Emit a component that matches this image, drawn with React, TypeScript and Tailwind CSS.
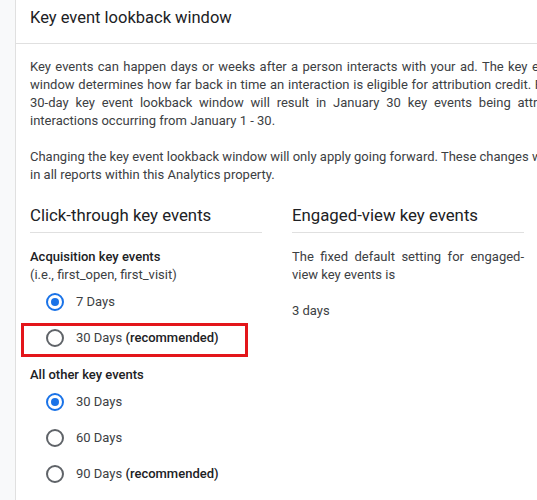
import React from "react";

function Radio({ checked }: { checked?: boolean }) {
  return checked ? (
    <span className="flex h-[18px] w-[18px] shrink-0 items-center justify-center rounded-full border-2 border-[#1a73e8]">
      <span className="h-[8px] w-[8px] rounded-full bg-[#1a73e8]" />
    </span>
  ) : (
    <span className="h-[18px] w-[18px] shrink-0 rounded-full border-2 border-[#5f6368]" />
  );
}

function Option({
  label,
  rec,
  checked,
  highlight,
}: {
  label: string;
  rec?: boolean;
  checked?: boolean;
  highlight?: boolean;
}) {
  return (
    <div className="relative flex h-[36px] items-center gap-[12px] pl-[16px]">
      {highlight && (
        <div className="pointer-events-none absolute left-[-9px] top-[3px] h-[34px] w-[227px] border-[3px] border-[#e3151a]" />
      )}
      <Radio checked={checked} />
      <span className="whitespace-nowrap text-[13px] leading-[18px] text-[#3c4043]">
        {label}
        {rec && <span className="font-medium text-[#202124]"> (recommended)</span>}
      </span>
    </div>
  );
}

function JLine({ children, narrow }: { children: React.ReactNode; narrow?: boolean }) {
  return (
    <span
      className={
        narrow
          ? "block w-[562px] whitespace-nowrap text-justify [text-align-last:justify]"
          : "block whitespace-nowrap text-justify [text-align-last:justify]"
      }
    >
      {children}
    </span>
  );
}

export default function App() {
  return (
    <div className="flex h-[500px] w-[537px] overflow-hidden bg-white font-['Roboto',sans-serif]">
      <div className="w-[16px] shrink-0 border-r border-[#e0e0e0] bg-[#f8f9fa]" />
      <div className="min-w-0 flex-1 overflow-hidden">
        <div className="h-[44px] border-b border-[#e0e0e0] pl-[14px] pt-[6px]">
          <h1 className="whitespace-nowrap text-[16.5px] leading-[24px] text-[#202124]">
            Key event lookback window
          </h1>
        </div>
        <div className="pl-[14px]">
          <p className="mt-[14px] w-[590px] text-[13px] leading-[18px] text-[#3c4043]">
            <JLine>Key events can happen days or weeks after a person interacts with your ad. The key event lookback</JLine>
            <JLine>window determines how far back in time an interaction is eligible for attribution credit. For example, a</JLine>
            <JLine narrow>30-day key event lookback window will result in January 30 key events being attributed to</JLine>
            <span className="block whitespace-nowrap">interactions occurring from January 1 - 30.</span>
          </p>
          <p className="mt-[18px] w-[590px] text-[13px] leading-[18px] text-[#3c4043]">
            <JLine>Changing the key event lookback window will only apply going forward. These changes will be reflected</JLine>
            <span className="block whitespace-nowrap">in all reports within this Analytics property.</span>
          </p>
          <div className="mt-[19px] grid w-[524px] grid-cols-2">
            <div className="pr-[30px]">
              <h2 className="whitespace-nowrap border-b border-[#e0e0e0] pb-[5px] text-[16.8px] leading-[24px] text-[#202124]">
                Click-through key events
              </h2>
              <div className="mt-[15px] text-[13px] leading-[18px]">
                <div className="font-medium text-[#202124]">Acquisition key events</div>
                <div className="text-[#3c4043]">(i.e., first_open, first_visit)</div>
              </div>
              <Option label="7 Days" checked />
              <Option label="30 Days" rec highlight />
              <div className="mt-[10px] text-[13px] font-medium leading-[18px] text-[#202124]">
                All other key events
              </div>
              <Option label="30 Days" checked />
              <Option label="60 Days" />
              <Option label="90 Days" rec />
            </div>
            <div className="pr-[30px]">
              <h2 className="whitespace-nowrap border-b border-[#e0e0e0] pb-[5px] text-[16.8px] leading-[24px] text-[#202124]">
                Engaged-view key events
              </h2>
              <p className="mt-[15px] text-justify text-[13px] leading-[18px] text-[#3c4043]">
                The fixed default setting for engaged-view key events is
              </p>
              <p className="mt-[18px] text-[13px] leading-[18px] text-[#3c4043]">3 days</p>
            </div>
          </div>
        </div>
      </div>
    </div>
  );
}
